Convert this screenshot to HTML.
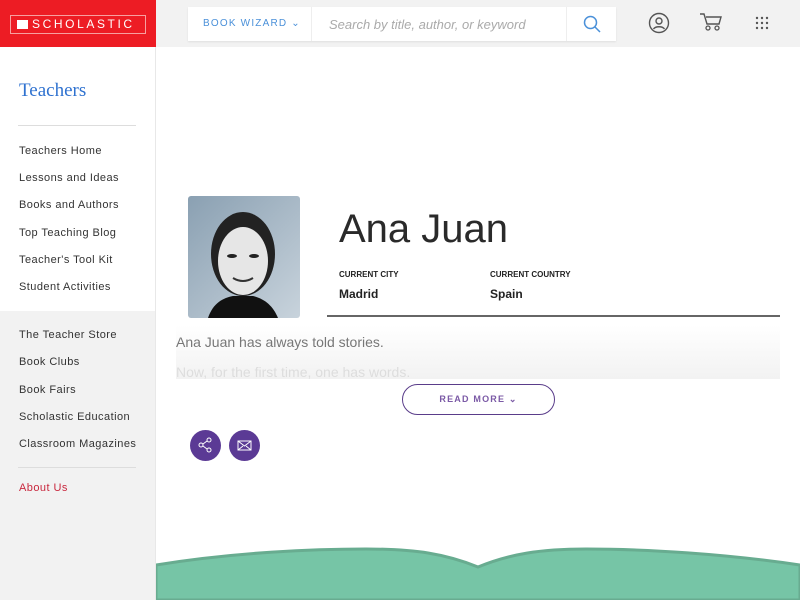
<!DOCTYPE html>
<html><head><style>
*{margin:0;padding:0;box-sizing:border-box}
body{width:800px;height:600px;overflow:hidden;background:#fff;font-family:"Liberation Sans",sans-serif;position:relative}
.top{position:absolute;left:156px;top:0;width:644px;height:47px;background:#f2f2f2}
.logo{position:absolute;left:0;top:0;width:156px;height:47px;background:#ed1c24}
.logo div{position:absolute;left:10px;top:15px;width:136px;height:19px;border:1px solid #f7a0a0;color:#fff;font-family:"Liberation Sans",sans-serif;font-size:12px;letter-spacing:2.6px;line-height:17px;padding-left:21px}
.logo span{position:absolute;left:6px;top:4px;width:11px;height:9px;background:#fff}
.search{position:absolute;left:188px;top:7px;width:428px;height:34px;background:#fff;box-shadow:0 1px 2px rgba(0,0,0,.08)}
.bw{position:absolute;left:15px;top:11px;font-size:10px;letter-spacing:1.2px;color:#4a90d9}
.sep{position:absolute;top:0;width:1px;height:34px;background:#eee}
.ph{position:absolute;left:141px;top:10px;font-size:13px;font-style:italic;color:#aaa}
.side{position:absolute;left:0;top:47px;width:156px;height:553px;border-right:1px solid #e8e8e8}
.gray{position:absolute;left:0;top:311px;width:155px;height:289px;background:#f2f2f2}
.nav{position:absolute;left:19px;font-size:11px;letter-spacing:.45px;color:#333}
h1{position:absolute;left:19px;top:80px;font-family:"Liberation Serif",serif;font-size:19px;color:#2f72d0;font-weight:normal}
.hr{position:absolute;left:18px;width:118px;height:1px;background:#ddd}
.photo{position:absolute;left:188px;top:196px;width:112px;height:122px;border-radius:3px;background:linear-gradient(135deg,#8aa0b2,#c8d3dc)}
.name{position:absolute;left:339px;top:207px;font-size:40px;color:#2a2a2a;font-weight:300}
.lab{position:absolute;top:270px;font-size:8px;font-weight:bold;color:#222}
.val{position:absolute;top:287px;font-size:12px;font-weight:bold;color:#222}
.line{position:absolute;left:327px;top:315px;width:453px;height:2px;background:#666}
.bio{position:absolute;left:176px;top:325px;width:604px;height:54px;background:linear-gradient(#fff,#f2f2f2);overflow:hidden;font-size:14px;color:#777;line-height:30px;padding-top:2px}
.bio p:nth-child(2){color:#ddd}
.rm{position:absolute;left:402px;top:384px;width:153px;height:31px;border:1px solid #5a3d8a;border-radius:16px;text-align:center;line-height:29px;font-size:9px;letter-spacing:1.2px;color:#7b5aa6;font-weight:bold}
.c{position:absolute;top:430px;width:31px;height:31px;border-radius:50%;background:#5b3a95}
</style></head><body>
<div class="top"></div>
<div class="logo"><div><span></span>SCHOLASTIC</div></div>
<div class="search"><div class="bw">BOOK WIZARD &#8964;</div><div class="sep" style="left:123px"></div><div class="ph">Search by title, author, or keyword</div><div class="sep" style="left:378px"></div>
<svg style="position:absolute;left:395px;top:8px" width="18" height="18"><circle cx="7.5" cy="7.5" r="6" fill="none" stroke="#4a90d9" stroke-width="1.5"/><line x1="12" y1="12" x2="17" y2="17" stroke="#4a90d9" stroke-width="1.5"/></svg></div>
<svg style="position:absolute;left:648px;top:12px" width="22" height="22"><circle cx="11" cy="11" r="9.5" fill="none" stroke="#555" stroke-width="1.4"/><circle cx="11" cy="9" r="3" fill="none" stroke="#555" stroke-width="1.4"/><path d="M5.5 17c2-3 9-3 11 0" fill="none" stroke="#555" stroke-width="1.4"/></svg>
<svg style="position:absolute;left:699px;top:12px" width="24" height="20"><path d="M1 2h4l3 10h12l2-7H7" fill="none" stroke="#555" stroke-width="1.4"/><circle cx="9" cy="16" r="2" fill="none" stroke="#555" stroke-width="1.3"/><circle cx="18" cy="16" r="2" fill="none" stroke="#555" stroke-width="1.3"/></svg>
<svg style="position:absolute;left:755px;top:16px" width="14" height="14" fill="#555"><circle cx="2" cy="2" r="1.2"/><circle cx="7" cy="2" r="1.2"/><circle cx="12" cy="2" r="1.2"/><circle cx="2" cy="7" r="1.2"/><circle cx="7" cy="7" r="1.2"/><circle cx="12" cy="7" r="1.2"/><circle cx="2" cy="12" r="1.2"/><circle cx="7" cy="12" r="1.2"/><circle cx="12" cy="12" r="1.2"/></svg>
<div class="side"></div><div class="gray"></div>
<h1>Teachers</h1>
<div class="hr" style="top:125px"></div>
<div class="nav" style="top:145px">Teachers Home</div>
<div class="nav" style="top:172px">Lessons and Ideas</div>
<div class="nav" style="top:199px">Books and Authors</div>
<div class="nav" style="top:227px">Top Teaching Blog</div>
<div class="nav" style="top:254px">Teacher's Tool Kit</div>
<div class="nav" style="top:281px">Student Activities</div>
<div class="nav" style="top:329px">The Teacher Store</div>
<div class="nav" style="top:356px">Book Clubs</div>
<div class="nav" style="top:384px">Book Fairs</div>
<div class="nav" style="top:411px">Scholastic Education</div>
<div class="nav" style="top:438px">Classroom Magazines</div>
<div class="hr" style="top:467px"></div>
<div class="nav" style="top:482px;color:#c9283e">About Us</div>
<div class="photo"><svg width="112" height="122"><path d="M20 122c5-15 15-20 25-22h20c12 3 20 10 25 22z" fill="#111"/><ellipse cx="55" cy="58" rx="32" ry="42" fill="#222"/><ellipse cx="55" cy="65" rx="25" ry="34" fill="#e6e6e6"/><ellipse cx="44" cy="60" rx="5" ry="2" fill="#222"/><ellipse cx="66" cy="60" rx="5" ry="2" fill="#222"/><path d="M45 82q10 6 20 0" stroke="#333" stroke-width="2" fill="none"/></svg></div>
<div class="name">Ana Juan</div>
<div class="lab" style="left:339px">CURRENT CITY</div>
<div class="lab" style="left:490px">CURRENT COUNTRY</div>
<div class="val" style="left:339px">Madrid</div>
<div class="val" style="left:490px">Spain</div>
<div class="line"></div>
<div class="bio"><p>Ana Juan has always told stories.</p><p>Now, for the first time, one has words.</p></div>
<div class="rm">READ MORE &#8964;</div>
<div class="c" style="left:190px"><svg width="31" height="31"><circle cx="11" cy="15" r="2" fill="none" stroke="#fff"/><circle cx="19" cy="10" r="2" fill="none" stroke="#fff"/><circle cx="19" cy="20" r="2" fill="none" stroke="#fff"/><path d="M13 14l4-3M13 16l4 3" stroke="#fff"/></svg></div>
<div class="c" style="left:229px"><svg width="31" height="31"><rect x="9" y="11" width="13" height="9" fill="none" stroke="#fff"/><path d="M9 11l6.5 5 6.5-5M9 20l5-4M22 20l-5-4" fill="none" stroke="#fff"/></svg></div>
<svg style="position:absolute;left:156px;top:540px" width="644" height="60"><path d="M0 25C80 12 160 9 210 9C260 9 290 14 322 27C354 14 384 9 430 9C490 9 570 14 644 25V60H0z" fill="#76c5a6" stroke="#68ac90" stroke-width="3"/></svg>
</body></html>
